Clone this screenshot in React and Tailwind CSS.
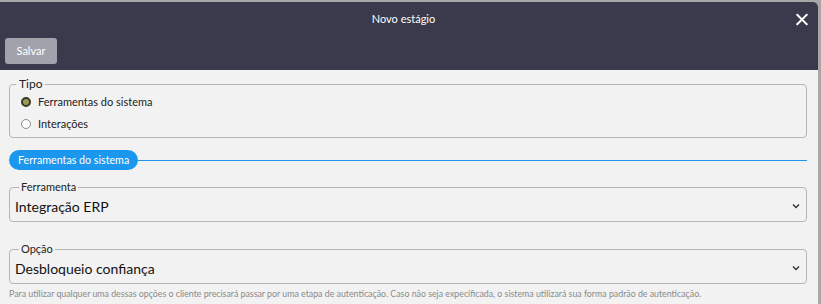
import React from "react";

function Chevron() {
  return (
    <svg width="8" height="6" viewBox="0 0 8 6" className="shrink-0">
      <polyline points="1,1.5 4,4.5 7,1.5" fill="none" stroke="#333" strokeWidth="1.4" />
    </svg>
  );
}

function Radio({ checked, label }) {
  return (
    <div className="h-[22px] flex items-center gap-[7px] pl-[11px]">
      {checked ? (
        <span className="w-[10px] h-[10px] rounded-full border-[2px] border-[#3a3a2a] bg-[#9c9a52] box-border" />
      ) : (
        <span className="w-[10px] h-[10px] rounded-full border border-[#8a8a8a] bg-white box-border" />
      )}
      <span className="text-[11px] text-[#222]">{label}</span>
    </div>
  );
}

function SelectField({ legend, value, className }) {
  return (
    <fieldset className={"border border-[#b5b5b5] rounded-[4px] px-[5px] " + className}>
      <legend className="ml-[4px] px-[2px] text-[11px] leading-[14px] text-[#222]">{legend}</legend>
      <div className="h-[24px] mb-[3px] flex items-center justify-between pr-[1px]">
        <span className="text-[14px] text-[#111]">{value}</span>
        <Chevron />
      </div>
    </fieldset>
  );
}

export default function App() {
  return (
    <div className="w-[821px] h-[304px] bg-[#a7a7a7] pt-[2px] pr-[3px] overflow-hidden">
      <div className="h-full bg-[#f2f2f2] rounded-tr-[5px] overflow-hidden flex flex-col font-['Lato',sans-serif]">
        <div className="h-[68px] bg-[#3a3a4c] px-[5px] flex flex-col">
          <div className="h-[34px] flex items-center">
            <div className="flex-1 text-center pl-[6px] text-[11px] text-white">Novo estágio</div>
            <div className="w-[12px] mr-[5px] flex justify-center">
              <svg width="13" height="13" viewBox="0 0 13 13">
                <path d="M1.5 1.5 L11.5 11.5 M11.5 1.5 L1.5 11.5" stroke="white" strokeWidth="2.2" strokeLinecap="square" />
              </svg>
            </div>
          </div>
          <div className="mt-[2px]">
            <button className="w-[52px] h-[26px] rounded-[3px] bg-[#a2a2ac] text-white text-[11px] flex items-center justify-center">
              Salvar
            </button>
          </div>
        </div>
        <div className="px-[9px] pt-[7px] flex flex-col">
          <fieldset className="border border-[#b5b5b5] rounded-[4px] pb-[2px] mr-[2px]">
            <legend className="ml-[6px] px-[3px] text-[12px] leading-[14px] text-[#222]">Tipo</legend>
            <Radio checked label="Ferramentas do sistema" />
            <Radio label="Interações" />
          </fieldset>
          <div className="mt-[12px] flex items-center mr-[2px]">
            <div className="h-[20px] px-[9px] rounded-full bg-[#1b97ee] text-white text-[10.7px] flex items-center">
              Ferramentas do sistema
            </div>
            <div className="flex-1 h-px bg-[#1b97ee]" />
          </div>
          <SelectField legend="Ferramenta" value="Integração ERP" className="mt-[10px] mr-[2px]" />
          <SelectField legend="Opção" value="Desbloqueio confiança" className="mt-[20px] mr-[2px]" />
          <div className="mt-[4px] text-[8.8px] leading-[12px] text-[#8a8a8a]">
            Para utilizar qualquer uma dessas opções o cliente precisará passar por uma etapa de autenticação. Caso não seja expecificada, o sistema utilizará sua forma padrão de autenticação.
          </div>
        </div>
      </div>
    </div>
  );
}
